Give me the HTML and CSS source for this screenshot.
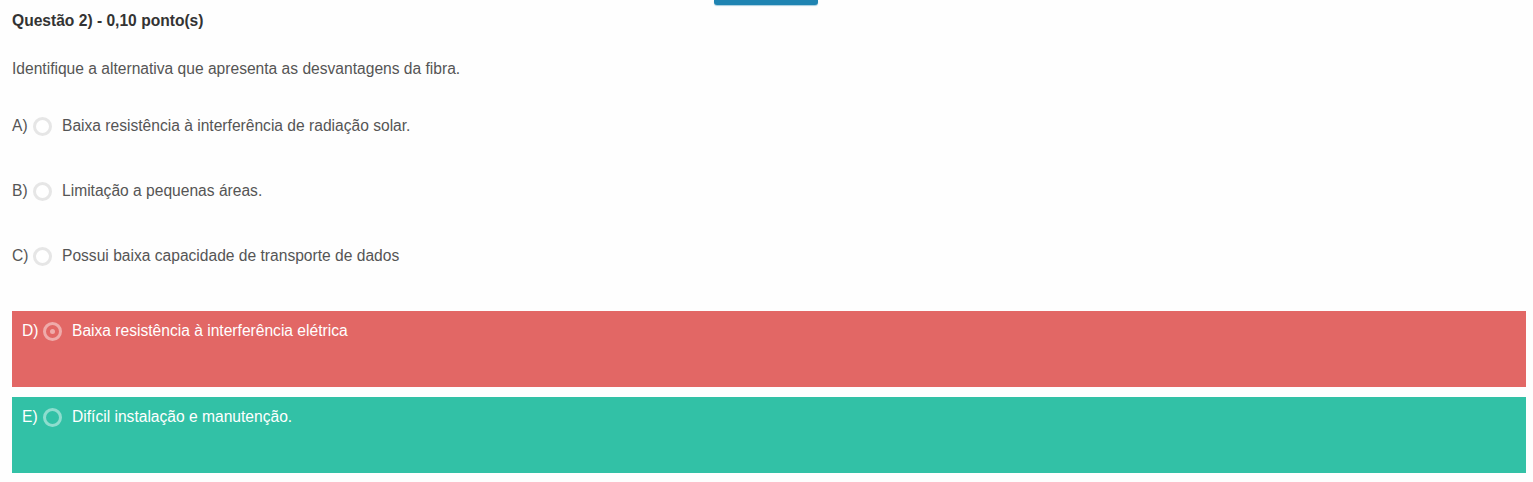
FILE: index.html
```html
<!DOCTYPE html>
<html lang="pt">
<head>
<meta charset="utf-8">
<link rel="stylesheet" href="styles.css">
</head>
<body>
<div class="page">
  <div class="topbar"><div class="tab"></div></div>
  <div class="question">
    <div class="title">Questão 2) - 0,10 ponto(s)</div>
    <p class="statement">Identifique a alternativa que apresenta as desvantagens da fibra.</p>
    <div class="options">
      <div class="option">
        <span class="letter">A)</span><span class="radio"></span><span class="text">Baixa resistência à interferência de radiação solar.</span>
      </div>
      <div class="option">
        <span class="letter">B)</span><span class="radio"></span><span class="text">Limitação a pequenas áreas.</span>
      </div>
      <div class="option">
        <span class="letter">C)</span><span class="radio"></span><span class="text">Possui baixa capacidade de transporte de dados</span>
      </div>
      <div class="option option-box wrong">
        <span class="letter">D)</span><span class="radio checked"></span><span class="text">Baixa resistência à interferência elétrica</span>
      </div>
      <div class="option option-box right">
        <span class="letter">E)</span><span class="radio"></span><span class="text">Difícil instalação e manutenção.</span>
      </div>
    </div>
  </div>
</div>
</body>
</html>
```
FILE: styles.css
```css
html, body {
  margin: 0;
  padding: 0;
  background: #fefefe;
}
body {
  font-family: "Liberation Sans", Arial, sans-serif;
  font-size: 15.6px;
  color: #555;
}
.page {
  position: relative;
  width: 1533px;
  height: 482px;
  overflow: hidden;
}
.topbar {
  position: absolute;
  top: 0;
  left: 714px;
}
.tab {
  width: 104px;
  height: 5px;
  background: #1f84b2;
  border-radius: 0 0 3px 3px;
  box-shadow: 0 1px 1px rgba(31,132,178,0.4);
}
.question {
  padding: 11px 7px 0 12px;
}
.title {
  font-weight: bold;
  color: #333;
  line-height: 20px;
}
.statement {
  margin: 28px 0 0;
  line-height: 20px;
}
.options {
  display: flex;
  flex-direction: column;
  margin-top: 37px;
}
.option {
  display: flex;
  align-items: center;
  height: 20px;
  line-height: 20px;
  margin-bottom: 45px;
}
.letter {
  width: 21px;
  white-space: nowrap;
}
.radio {
  box-sizing: border-box;
  flex: none;
  width: 19px;
  height: 19px;
  border-radius: 50%;
  border: 3px solid #e6e6e6;
  background: #fff;
  margin-right: 10px;
  display: flex;
  align-items: center;
  justify-content: center;
}
.option-box {
  align-items: flex-start;
  height: 76px;
  box-sizing: border-box;
  padding: 10px 10px 0;
  color: #fff;
  margin-bottom: 10px;
}
.option-box .radio {
  margin-top: 1px;
  background: transparent;
  border-color: rgba(255,255,255,0.45);
}
.radio.checked::after {
  content: "";
  width: 5px;
  height: 5px;
  border-radius: 50%;
  background: rgba(255,255,255,0.45);
}
.wrong {
  background: #e26765;
}
.right {
  background: #32c1a6;
}
```
